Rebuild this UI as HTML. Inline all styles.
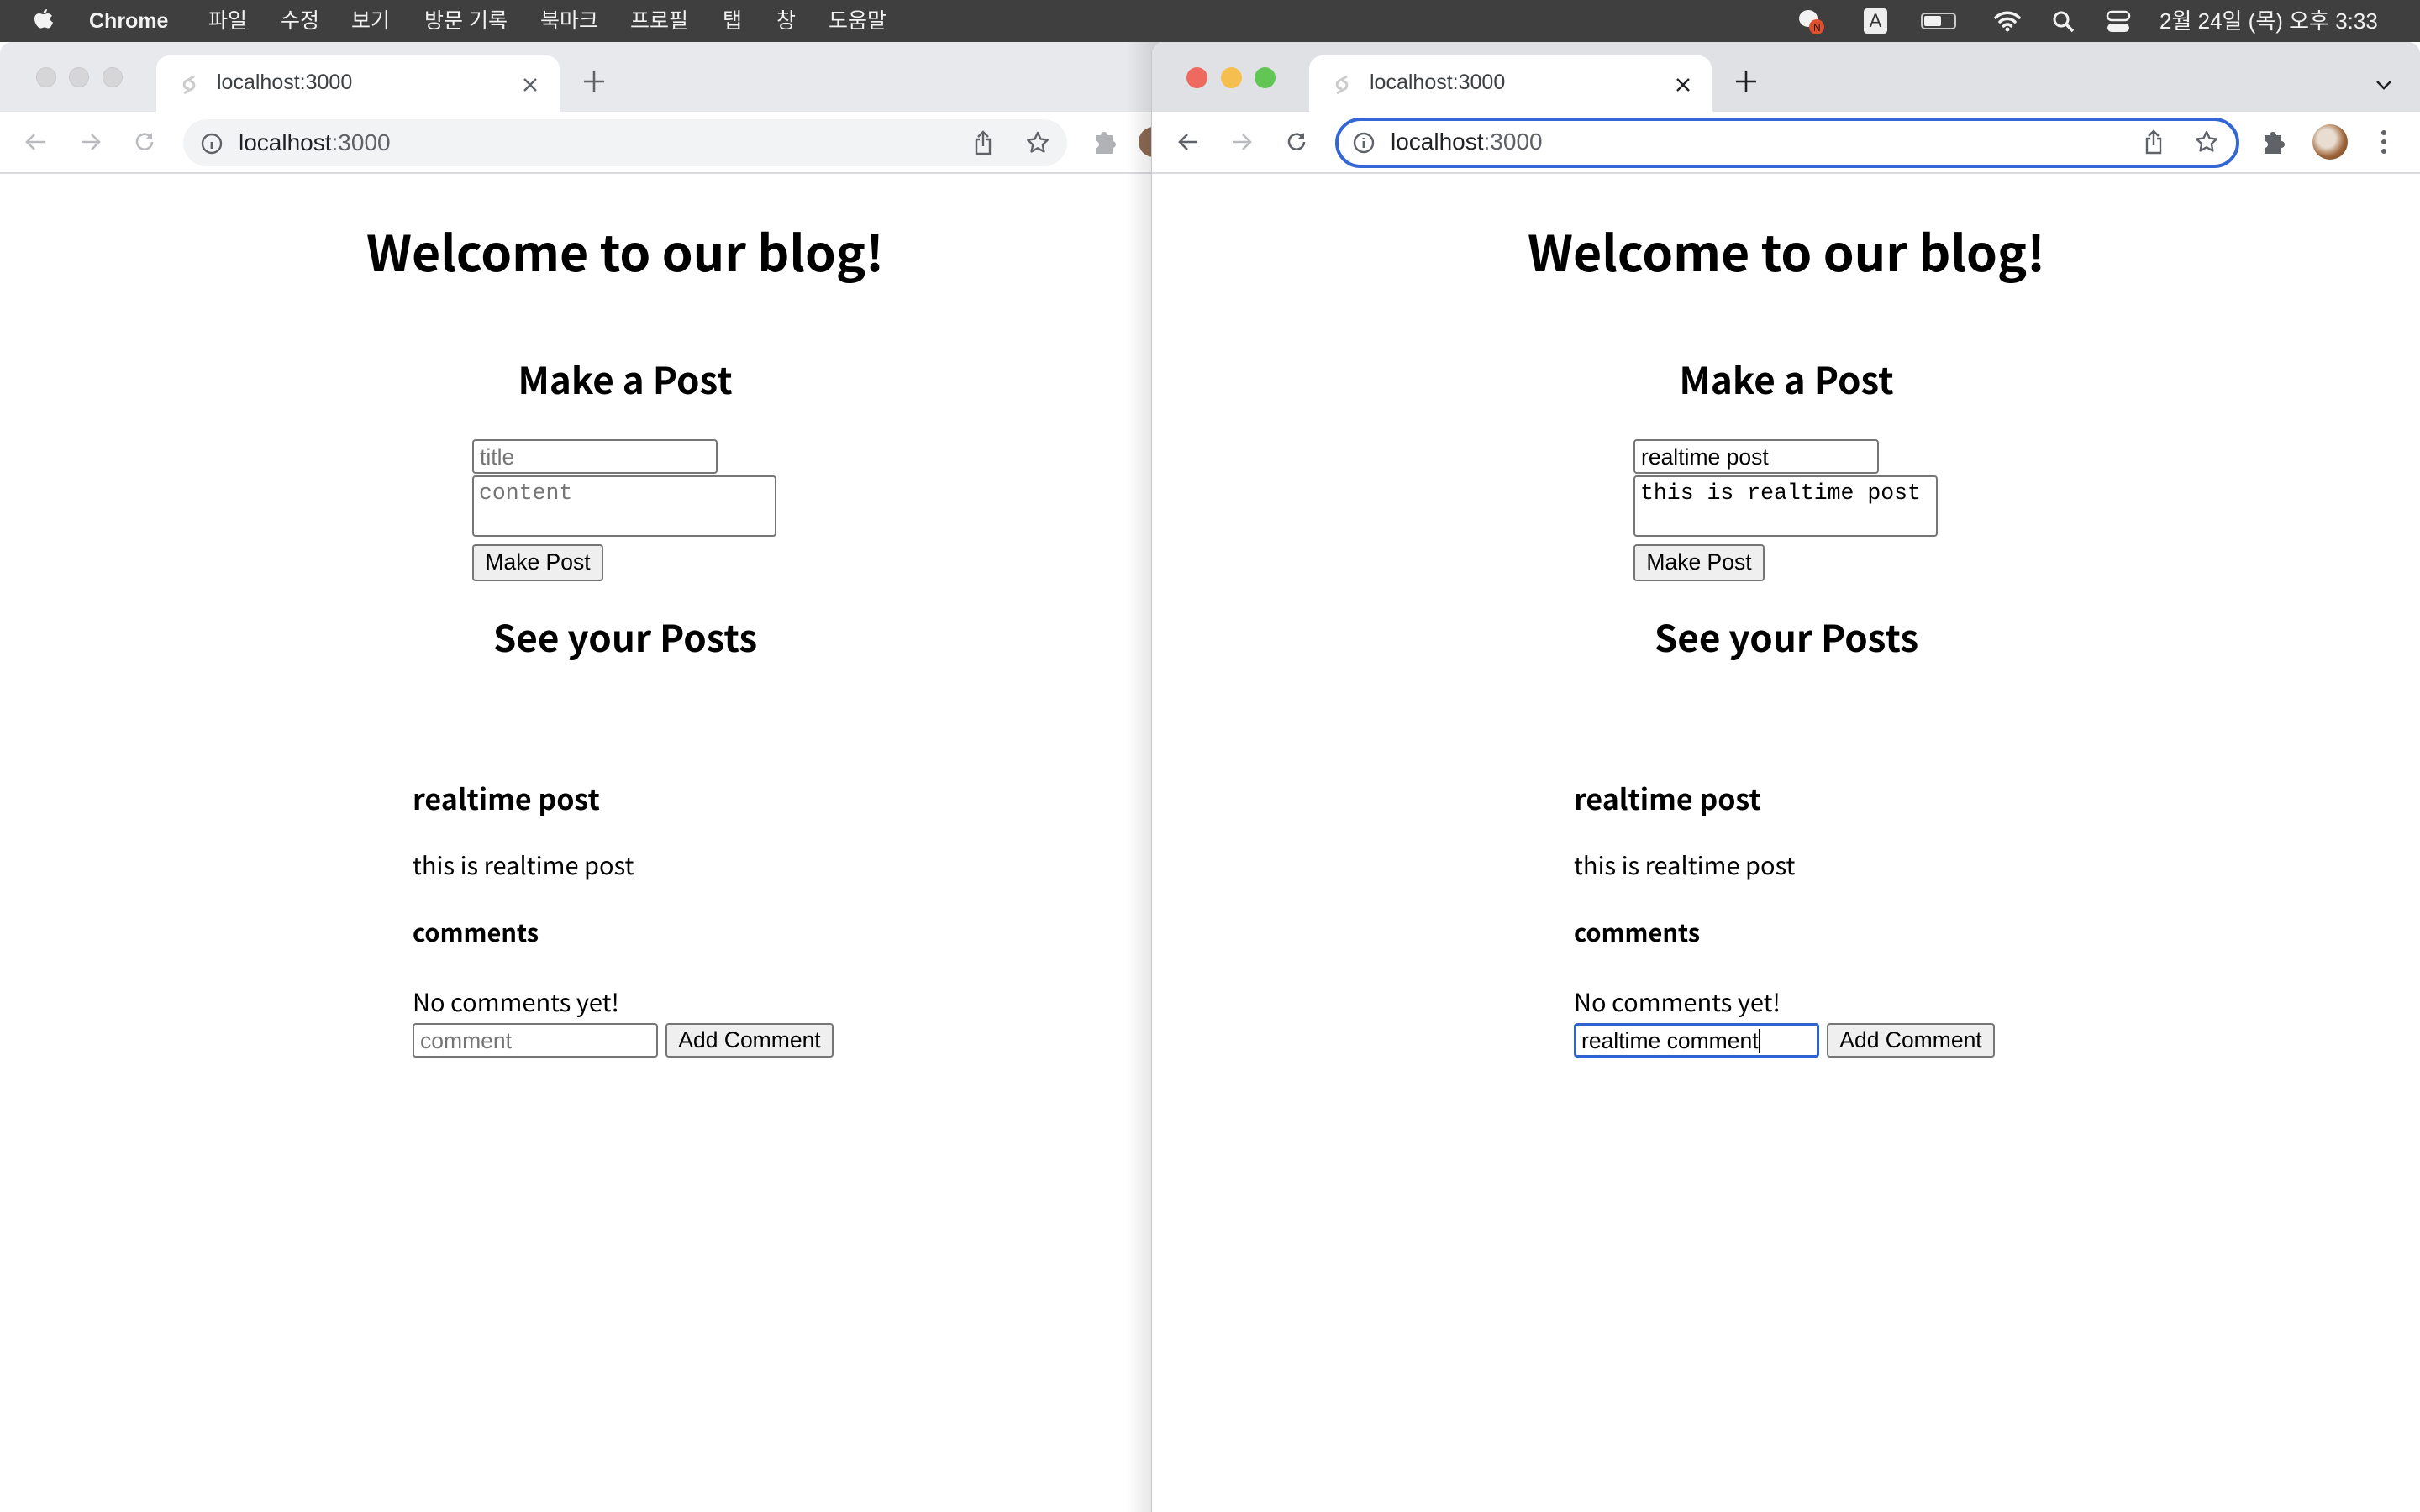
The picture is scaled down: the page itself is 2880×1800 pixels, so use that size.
<!DOCTYPE html>
<html><head><meta charset="utf-8">
<style>
*{margin:0;padding:0;box-sizing:border-box}
html,body{width:2880px;height:1800px;overflow:hidden;background:#fff;font-family:"Liberation Sans","Noto Sans CJK KR",sans-serif}
.abs{position:absolute}
#menubar{position:absolute;left:0;top:0;width:2880px;height:50px;background:#3f3f3f;color:#f2f2f2;font-size:25px;font-family:"Liberation Sans","Noto Sans CJK KR",sans-serif}
#menubar span{position:absolute;top:8px;line-height:34px;white-space:nowrap}
.win{position:absolute;top:50px;height:1750px;overflow:hidden;background:#fff}
.tabstrip{position:absolute;left:0;top:0;width:100%;height:83px}
.tab{position:absolute;top:16px;height:67px;background:#fff;border-radius:16px 16px 0 0}
.tab .t{position:absolute;left:72px;top:18px;font-size:25px;color:#3c4043;font-family:"Liberation Sans",sans-serif}
.toolbar{position:absolute;left:0;top:83px;width:100%;height:74px;background:#fff;border-bottom:2px solid #dadce0}
.url{position:absolute;top:9px;height:56px;border-radius:28px;background:#f1f3f4}
.url .t{position:absolute;left:66px;top:12px;font-size:28px;color:#202124}
.url .t b{font-weight:normal;color:#5f6368}
.page{position:absolute;top:0;width:1510px;height:1800px}
.h{position:absolute;font-family:"Noto Sans CJK KR","Liberation Sans",sans-serif;font-weight:bold;line-height:1;white-space:nowrap;color:#000}
.p{position:absolute;font-family:"Noto Sans CJK KR","Liberation Sans",sans-serif;line-height:1;white-space:nowrap;color:#000}
.inp{position:absolute;border:2px solid #767676;border-radius:4px;background:#fff;font-size:26.5px;font-family:"Liberation Sans",sans-serif;padding:5px 0 0 7px;line-height:29px;white-space:nowrap;overflow:hidden}
.ta{font-family:"Liberation Mono",monospace;font-size:26.5px;padding:5px 0 0 6px}
.ph{color:#757575}
.btn{position:absolute;border:2px solid #767676;border-radius:4px;background:#efefef;font-size:26.5px;font-family:"Liberation Sans",sans-serif;text-align:center;line-height:38px;color:#000;white-space:nowrap}
</style></head><body>

<div id="menubar">
  <svg class="abs" style="left:40px;top:9px" width="24" height="30" viewBox="0 0 24 30"><path d="M16 2c0 3-2 5-4.5 5C11.5 4 14 2 16 2zM12 8c2 0 3-1 5-1 2.5 0 4 1.5 5 3-3 1.5-3 6 1 7.5-1 3-3 7-5.5 7-2 0-2.5-1-4.5-1s-2.5 1-4.5 1C5 24.5 1 18 1 13.5 1 9.5 3.5 7 6.5 7 8.5 7 10 8 12 8z" fill="#f2f2f2"/></svg>
  <span style="left:106px;font-weight:bold">Chrome</span>
  <span style="left:248px">파일</span>
  <span style="left:334px">수정</span>
  <span style="left:418px">보기</span>
  <span style="left:505px">방문 기록</span>
  <span style="left:643px">북마크</span>
  <span style="left:750px">프로필</span>
  <span style="left:860px">탭</span>
  <span style="left:924px">창</span>
  <span style="left:986px">도움말</span>
  <svg class="abs" style="left:2138px;top:9px" width="34" height="34" viewBox="0 0 34 34"><path d="M14 3a11 10 0 1 0 0.1 0z" fill="#f2f2f2"/><circle cx="24" cy="23" r="9" fill="#e0502f"/><text x="20" y="28" font-size="12" fill="#222" font-family="Liberation Sans">N</text></svg>
  <div class="abs" style="left:2218px;top:10px;width:28px;height:30px;background:#eee;border-radius:4px;color:#333;font-size:22px;text-align:center;line-height:30px">A</div>
  <div class="abs" style="left:2286px;top:15px;width:42px;height:20px;border:2px solid #ccc;border-radius:5px"><div style="margin:2px;width:20px;height:12px;background:#f2f2f2;border-radius:2px"></div></div>
  <svg class="abs" style="left:2372px;top:11px" width="34" height="28" viewBox="0 0 34 28"><path d="M3 10a20 20 0 0 1 28 0M8 15a13 13 0 0 1 18 0M12.5 20a6 6 0 0 1 9 0" stroke="#f2f2f2" stroke-width="3.5" fill="none" stroke-linecap="round"/><circle cx="17" cy="24" r="2.5" fill="#f2f2f2"/></svg>
  <svg class="abs" style="left:2442px;top:12px" width="28" height="28" viewBox="0 0 28 28"><circle cx="11" cy="11" r="8" stroke="#f2f2f2" stroke-width="3" fill="none"/><path d="M17 17l8 8" stroke="#f2f2f2" stroke-width="3.5"/></svg>
  <svg class="abs" style="left:2506px;top:12px" width="30" height="28" viewBox="0 0 30 28"><rect x="2" y="2" width="26" height="10" rx="5" fill="none" stroke="#f2f2f2" stroke-width="2.5"/><rect x="2" y="16" width="26" height="10" rx="5" fill="#f2f2f2"/></svg>
  <span style="left:2570px;font-size:26px">2월 24일 (목) 오후 3:33</span>
</div>

<!-- LEFT WINDOW -->
<div class="win" style="left:0;width:1380px;background:#fff;border-radius:14px 0 0 0">
  <div class="tabstrip" style="background:#e8e9ec"></div>
  <div class="abs" style="left:43px;top:30px;width:24px;height:24px;border-radius:50%;background:#d6d6d8;border:1px solid #c8c8ca"></div>
  <div class="abs" style="left:82px;top:30px;width:24px;height:24px;border-radius:50%;background:#d6d6d8;border:1px solid #c8c8ca"></div>
  <div class="abs" style="left:122px;top:30px;width:24px;height:24px;border-radius:50%;background:#d6d6d8;border:1px solid #c8c8ca"></div>
  <div class="tab" style="left:186px;width:480px">
    <svg class="abs" style="left:26px;top:21px" width="26" height="28" viewBox="0 0 26 28"><path d="M19 4l-9 5a5 5 0 0 0 0 9l3 1M7 24l9-5a5 5 0 0 0 0-9l-3-1" stroke="#ccc" stroke-width="3" fill="none"/></svg>
    <div class="t">localhost:3000</div>
    <svg class="abs" style="left:436px;top:26px" width="18" height="18" viewBox="0 0 18 18"><path d="M2 2l14 14M16 2L2 16" stroke="#5f6368" stroke-width="2.4"/></svg>
  </div>
  <svg class="abs" style="left:694px;top:34px" width="26" height="26" viewBox="0 0 26 26"><path d="M13 1v24M1 13h24" stroke="#5f6368" stroke-width="2.6"/></svg>
  <div class="toolbar">
    <svg class="abs" style="left:28px;top:22px" width="28" height="28" viewBox="0 0 28 28"><path d="M25 14H4M13 5l-9 9 9 9" stroke="#b9bbbe" stroke-width="2.6" fill="none"/></svg>
    <svg class="abs" style="left:94px;top:22px" width="28" height="28" viewBox="0 0 28 28"><path d="M3 14h21M15 5l9 9-9 9" stroke="#b9bbbe" stroke-width="2.6" fill="none"/></svg>
    <svg class="abs" style="left:158px;top:22px" width="28" height="28" viewBox="0 0 28 28"><path d="M23 14a9 9 0 1 1-3-7" stroke="#b9bbbe" stroke-width="2.6" fill="none"/><path d="M23 3v8h-8" fill="#b9bbbe"/></svg>
    <div class="url" style="left:218px;width:1052px">
      <svg class="abs" style="left:20px;top:15px" width="28" height="28" viewBox="0 0 28 28"><circle cx="14" cy="14" r="11" stroke="#5f6368" stroke-width="2.4" fill="none"/><path d="M14 12v8M14 8v1" stroke="#5f6368" stroke-width="2.8"/></svg>
      <div class="t">localhost<b>:3000</b></div>
      <svg class="abs" style="left:940px;top:12px" width="24" height="32" viewBox="0 0 24 32"><path d="M8 12H4v17h16V12h-4M12 20V3M6 9l6-6 6 6" stroke="#5f6368" stroke-width="2.4" fill="none"/></svg>
      <svg class="abs" style="left:1002px;top:13px" width="30" height="30" viewBox="0 0 30 30"><path d="M15 3l3.6 7.6 8.2 1-6 5.6 1.6 8.2L15 21.3l-7.4 4.1 1.6-8.2-6-5.6 8.2-1z" stroke="#5f6368" stroke-width="2.4" fill="none" stroke-linejoin="round"/></svg>
    </div>
    <svg class="abs" style="left:1300px;top:20px" width="30" height="32" viewBox="0 0 30 32"><path d="M4 8h6a4 4 0 0 1 8 0h6v7a4 4 0 0 1 0 8v7H4v-7a4 4 0 0 0 0-8z" fill="#b0b2b5"/></svg>
    <div class="abs" style="left:1355px;top:18px;width:36px;height:36px;border-radius:50%;background:#8a6a55"></div>
  </div>
  <div class="page" style="left:-11px;top:-50px">
    <div class="h" style="left:0;width:1510px;text-align:center;top:268px;font-size:59px">Welcome to our blog!</div>
    <div class="h" style="left:0;width:1510px;text-align:center;top:428px;font-size:44px">Make a Post</div>
    <div class="inp ph" style="left:573px;top:523px;width:292px;height:41px">title</div>
    <div class="inp ta ph" style="left:573px;top:566px;width:362px;height:73px">content</div>
    <div class="btn" style="left:573px;top:648px;width:156px;height:44px">Make Post</div>
    <div class="h" style="left:0;width:1510px;text-align:center;top:735px;font-size:44px">See your Posts</div>
    <div class="h" style="left:502px;top:933px;font-size:34px">realtime post</div>
    <div class="p" style="left:502px;top:1015px;font-size:29px">this is realtime post</div>
    <div class="h" style="left:502px;top:1095px;font-size:29px">comments</div>
    <div class="p" style="left:502px;top:1178px;font-size:29px">No comments yet!</div>
    <div class="inp ph" style="left:502px;top:1218px;width:292px;height:41px">comment</div>
    <div class="btn" style="left:803px;top:1218px;width:200px;height:41px;line-height:36px">Add Comment</div>
  </div>
</div>

<!-- RIGHT WINDOW -->
<div class="abs" style="left:1340px;top:50px;width:40px;height:1750px;background:linear-gradient(to right,rgba(0,0,0,0),rgba(0,0,0,0.12))"></div>
<div class="win" style="left:1370px;width:1510px;border-radius:14px 14px 0 0;border-left:1px solid #c8c8c8">
  <div class="tabstrip" style="background:#dfe1e5"></div>
  <div class="abs" style="left:41px;top:30px;width:25px;height:25px;border-radius:50%;background:#ee6a5f"></div>
  <div class="abs" style="left:82px;top:30px;width:25px;height:25px;border-radius:50%;background:#f5be4f"></div>
  <div class="abs" style="left:122px;top:30px;width:25px;height:25px;border-radius:50%;background:#62c655"></div>
  <div class="tab" style="left:187px;width:479px">
    <svg class="abs" style="left:26px;top:21px" width="26" height="28" viewBox="0 0 26 28"><path d="M19 4l-9 5a5 5 0 0 0 0 9l3 1M7 24l9-5a5 5 0 0 0 0-9l-3-1" stroke="#ccc" stroke-width="3" fill="none"/></svg>
    <div class="t">localhost:3000</div>
    <svg class="abs" style="left:436px;top:26px" width="18" height="18" viewBox="0 0 18 18"><path d="M2 2l14 14M16 2L2 16" stroke="#202124" stroke-width="2.4"/></svg>
  </div>
  <svg class="abs" style="left:694px;top:34px" width="26" height="26" viewBox="0 0 26 26"><path d="M13 1v24M1 13h24" stroke="#202124" stroke-width="2.6"/></svg>
  <svg class="abs" style="left:1456px;top:45px" width="20" height="12" viewBox="0 0 20 12"><path d="M2 2l8 8 8-8" stroke="#202124" stroke-width="2.6" fill="none"/></svg>
  <div class="toolbar">
    <svg class="abs" style="left:29px;top:22px" width="28" height="28" viewBox="0 0 28 28"><path d="M25 14H4M13 5l-9 9 9 9" stroke="#5f6368" stroke-width="2.6" fill="none"/></svg>
    <svg class="abs" style="left:93px;top:22px" width="28" height="28" viewBox="0 0 28 28"><path d="M3 14h21M15 5l9 9-9 9" stroke="#b9bbbe" stroke-width="2.6" fill="none"/></svg>
    <svg class="abs" style="left:158px;top:22px" width="28" height="28" viewBox="0 0 28 28"><path d="M23 14a9 9 0 1 1-3-7" stroke="#5f6368" stroke-width="2.6" fill="none"/><path d="M23 3v8h-8" fill="#5f6368"/></svg>
    <div class="url" style="left:218px;width:1076px;top:7px;height:60px;background:#fff;border:4px solid #3367d6;border-radius:30px">
      <svg class="abs" style="left:16px;top:12px" width="28" height="28" viewBox="0 0 28 28"><circle cx="14" cy="14" r="11" stroke="#5f6368" stroke-width="2.4" fill="none"/><path d="M14 12v8M14 8v1" stroke="#5f6368" stroke-width="2.8"/></svg>
      <div class="t" style="left:62px;top:9px">localhost<b>:3000</b></div>
      <svg class="abs" style="left:958px;top:9px" width="24" height="32" viewBox="0 0 24 32"><path d="M8 12H4v17h16V12h-4M12 20V3M6 9l6-6 6 6" stroke="#5f6368" stroke-width="2.4" fill="none"/></svg>
      <svg class="abs" style="left:1018px;top:10px" width="30" height="30" viewBox="0 0 30 30"><path d="M15 3l3.6 7.6 8.2 1-6 5.6 1.6 8.2L15 21.3l-7.4 4.1 1.6-8.2-6-5.6 8.2-1z" stroke="#5f6368" stroke-width="2.4" fill="none" stroke-linejoin="round"/></svg>
    </div>
    <svg class="abs" style="left:1320px;top:20px" width="30" height="32" viewBox="0 0 30 32"><path d="M4 8h6a4 4 0 0 1 8 0h6v7a4 4 0 0 1 0 8v7H4v-7a4 4 0 0 0 0-8z" fill="#5f6368"/></svg>
    <div class="abs" style="left:1381px;top:15px;width:42px;height:42px;border-radius:50%;background:radial-gradient(circle at 40% 40%,#e8ddd0 0 30%,#a0663a 60%,#5a3a22)"></div>
    <svg class="abs" style="left:1460px;top:20px" width="12" height="32" viewBox="0 0 12 32"><circle cx="6" cy="5" r="3" fill="#5f6368"/><circle cx="6" cy="16" r="3" fill="#5f6368"/><circle cx="6" cy="27" r="3" fill="#5f6368"/></svg>
  </div>
  <div class="page" style="left:0;top:-50px">
    <div class="h" style="left:0;width:1510px;text-align:center;top:268px;font-size:59px">Welcome to our blog!</div>
    <div class="h" style="left:0;width:1510px;text-align:center;top:428px;font-size:44px">Make a Post</div>
    <div class="inp" style="left:573px;top:523px;width:292px;height:41px">realtime post</div>
    <div class="inp ta" style="left:573px;top:566px;width:362px;height:73px">this is realtime post</div>
    <div class="btn" style="left:573px;top:648px;width:156px;height:44px">Make Post</div>
    <div class="h" style="left:0;width:1510px;text-align:center;top:735px;font-size:44px">See your Posts</div>
    <div class="h" style="left:502px;top:933px;font-size:34px">realtime post</div>
    <div class="p" style="left:502px;top:1015px;font-size:29px">this is realtime post</div>
    <div class="h" style="left:502px;top:1095px;font-size:29px">comments</div>
    <div class="p" style="left:502px;top:1178px;font-size:29px">No comments yet!</div>
    <div class="inp" style="left:502px;top:1218px;width:292px;height:41px;border:3px solid #2f63d0;padding-left:6px;padding-top:4px">realtime comment<span style="display:inline-block;width:2px;height:28px;background:#000;vertical-align:-5px"></span></div>
    <div class="btn" style="left:803px;top:1218px;width:200px;height:41px;line-height:36px">Add Comment</div>
  </div>
</div>
</body></html>
